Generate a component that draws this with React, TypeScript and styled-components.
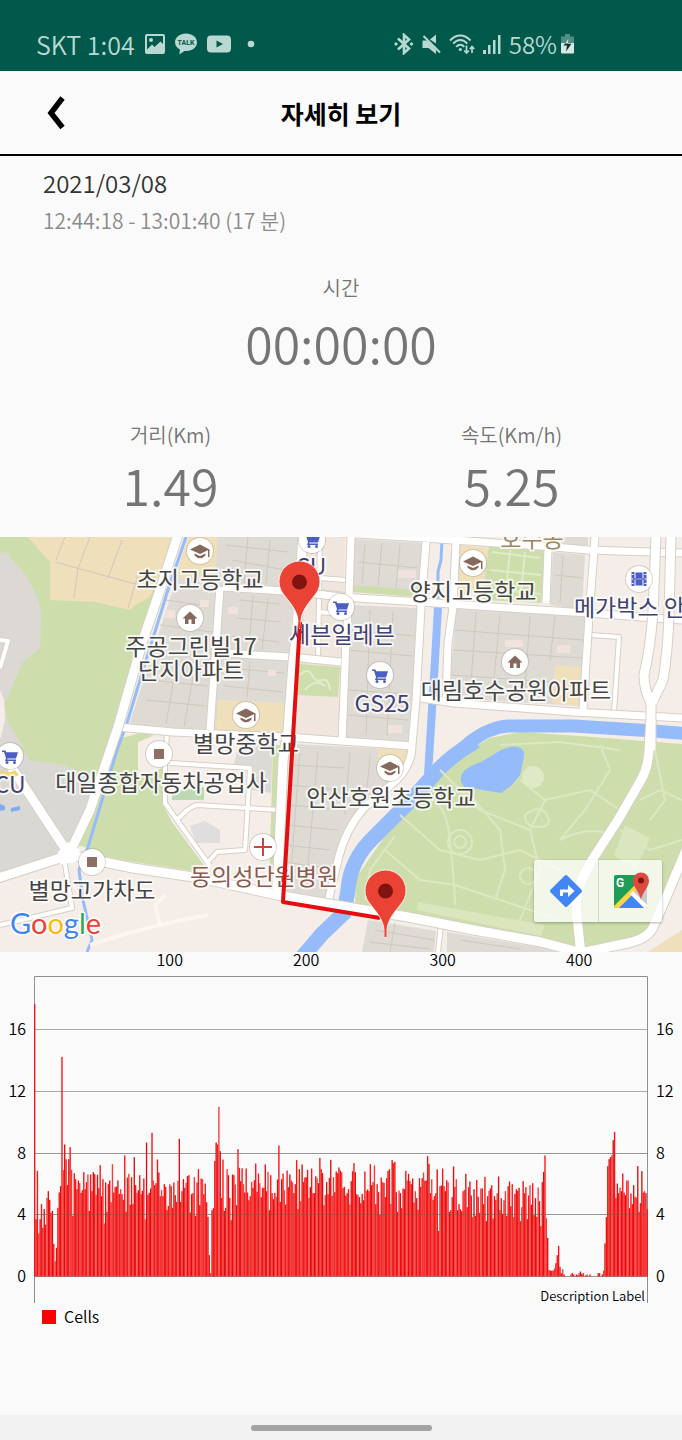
import React from 'react';
import styled, { createGlobalStyle } from 'styled-components';

const fontStack = `'Noto Sans CJK KR', 'Noto Sans', sans-serif`;

const GlobalStyle = createGlobalStyle`
  *, *::before, *::after { box-sizing: border-box; }
  html, body, #root { min-height: 100vh; }
  body { margin: 0; background: #fafafa; font-family: ${fontStack}; }
  #root { display: flex; flex-direction: column; }
  h1, p, dl, dt, dd, figure { margin: 0; font-weight: inherit; }
`;

const Screen = styled.div`
  flex: 1;
  display: flex;
  flex-direction: column;
  width: 100%;
  color: #757575;
  font-weight: 350;
`;

const StatusBar = styled.div`
  display: flex;
  justify-content: space-between;
  height: 71px;
  padding: 17px 108px 0 36px;
  background: #00594b;
  color: #b9d8d2;
  font-size: 24px;
  line-height: 52px;
`;

const StatusGroup = styled.div<{ $gap: number }>`
  display: flex;
  align-items: center;
  gap: ${(p) => p.$gap}px;
  white-space: nowrap;
  svg { display: block; flex: none; }
`;

const Carrier = styled.span`
  font-size: 25px;
`;

const TitleBar = styled.header`
  display: grid;
  grid-template-columns: 112px 1fr 112px;
  align-items: center;
  height: 85px;
  border-bottom: 2px solid #000;
`;

const BackButton = styled.button`
  display: flex;
  align-items: center;
  justify-content: center;
  height: 64px;
  padding: 0;
  border: 0;
  background: none;
  cursor: pointer;
`;

const Title = styled.h1`
  color: #000;
  font-size: 25px;
  font-weight: 700;
  line-height: 36px;
  text-align: center;
`;

const Session = styled.section`
  padding: 9px 43px 0;
`;

const SessionDate = styled.p`
  color: #333;
  font-size: 24px;
  line-height: 36px;
`;

const SessionSpan = styled.p`
  color: #8c8c8c;
  font-size: 21px;
  line-height: 38px;
`;

const Stats = styled.dl`
  display: grid;
  grid-template-columns: 1fr 1fr;
  row-gap: 47px;
  padding: 33px 0 23px;
  text-align: center;
`;

const Stat = styled.div<{ $wide?: boolean }>`
  grid-column: ${(p) => (p.$wide ? '1 / -1' : 'auto')};
  display: flex;
  flex-direction: column;
  gap: ${(p) => (p.$wide ? 8 : 3)}px;
`;

const StatLabel = styled.dt`
  font-size: 20px;
  line-height: 32px;
`;

const StatValue = styled.dd`
  font-size: 50px;
  line-height: 60px;
`;

const MapFrame = styled.section`
  position: relative;
  height: 415px;
  overflow: hidden;
`;

const MapCanvas = styled.svg`
  display: block;
  width: 100%;
  height: 100%;
  font-weight: 400;
`;

const MapActions = styled.div`
  position: absolute;
  right: 20px;
  bottom: 30px;
  display: flex;
  border-radius: 2px;
  background: rgba(255, 255, 255, 0.74);
  box-shadow: 0 1px 3px rgba(0, 0, 0, 0.3);
`;

const MapAction = styled.button`
  display: flex;
  align-items: center;
  justify-content: center;
  width: 64px;
  height: 62px;
  padding: 0;
  border: 0;
  background: none;
  cursor: pointer;
  & + & { border-left: 1px solid rgba(0, 0, 0, 0.12); }
`;

const ChartFrame = styled.figure`
  flex: 1;
`;

const ChartCanvas = styled.svg`
  display: block;
  width: 100%;
  height: auto;
  text { font-family: ${fontStack}; font-size: 16px; fill: #000; }
`;

const NavBar = styled.nav`
  display: flex;
  justify-content: center;
  align-items: center;
  height: 25px;
  background: #f2f2f2;
`;

const HomeHandle = styled.button`
  width: 181px;
  height: 6px;
  padding: 0;
  border: 0;
  border-radius: 3px;
  background: #a3a3a3;
`;

/* ---------- status icons ---------- */

const tint = '#b9d8d2';

const PictureIcon = () => (
  <svg width="20" height="20" viewBox="0 0 20 20">
    <rect x="1" y="1" width="18" height="18" rx="1" fill="none" stroke={tint} strokeWidth="2" />
    <circle cx="6" cy="6" r="2" fill={tint} />
    <path d="M2 15.500 L7 10.500 L9.500 13 L15.500 7.500 L19 11 V18 H2Z" fill={tint} />
  </svg>
);

const TalkIcon = () => (
  <svg width="22" height="22" viewBox="0 0 22 22">
    <path d="M11 0.500C5 .5 0 4.300 0 9.200c0 3.200 2 5.900 5 7.400L4.300 21.500 9.500 17.900c8 .8 12.500-4 12.500-8.700C22 4.300 17 .5 11 .5Z" fill={tint} />
    <text x="11" y="12" textAnchor="middle" fontFamily="Roboto, sans-serif" fontWeight="700" fontSize="7" fill="#00594b">TALK</text>
  </svg>
);

const VideoIcon = () => (
  <svg width="24" height="18" viewBox="0 0 24 18">
    <rect y="0.500" width="24" height="17" rx="4" fill={tint} />
    <path d="M9.500 5.500 16 9 9.500 12.500Z" fill="#00594b" />
  </svg>
);

const DotIcon = () => (
  <svg width="14" height="8" viewBox="0 0 14 8"><circle cx="10" cy="4" r="3.300" fill={tint} /></svg>
);

const BluetoothIcon = () => (
  <svg width="20" height="22" viewBox="0 0 20 22">
    <path d="M4 5.500 L15 15.500 L10 20 V2 L15 6.500 L4 16.500" fill="none" stroke={tint} strokeWidth="2.600" />
    <path d="M0 11 2 9 4 11 2 13ZM15.500 11 17.500 9 19.500 11 17.500 13Z" fill={tint} />
  </svg>
);

const MuteIcon = () => (
  <svg width="19" height="21" viewBox="0 0 19 21">
    <path d="M0.500 6.500 H5 L14 15.500 V20 L6.500 14 H0.500Z M8 5.500 L14 .5 V9.500Z" fill={tint} />
    <path d="M1.500 2 18 18.500" stroke={tint} strokeWidth="2" />
  </svg>
);

const WifiIcon = () => (
  <svg width="26" height="21" viewBox="0 0 26 21" fill="none" stroke={tint} strokeWidth="1.900">
    <path d="M1 6.500 C7 -.2 15.500 -.2 21.500 6.500" />
    <path d="M4.200 9.600 C8.500 4.800 14 4.800 18.300 9.600" />
    <path d="M7.200 12.800 C9.800 10 12.800 10 15.300 12.800" />
    <circle cx="11.300" cy="15.500" r="1.600" fill={tint} stroke="none" />
    <path d="M17.500 11.500V19M15.200 16.500 17.500 19 19.800 16.500M23 19V12.500M20.800 15 23 12.500 25.200 15" strokeWidth="1.700" />
  </svg>
);

const SignalIcon = () => (
  <svg width="18" height="19" viewBox="0 0 18 19">
    <path d="M0 15h3v4H0ZM5 10h2.500v9H5ZM10 5h2.500v14H10ZM15 0h2.500v19H15Z" fill={tint} />
  </svg>
);

const BatteryIcon = () => (
  <svg width="13" height="20" viewBox="0 0 13 20">
    <path d="M4 0h5v2.500h4V9H0V2.500h4Z" fill="#4f8e84" />
    <path d="M0 9h13v9.500q0 1-1 1H1q-1 0-1-1Z" fill="#d5e8e4" />
    <path d="M7.500 4.500 2.500 11.500H6L5 17.500 10.500 9.800H7Z" fill="#12312c" />
    <path d="M7.500 4.500 4 9.500H7.100Z" fill="#d5e8e4" />
  </svg>
);

/* ---------- map ---------- */

type PoiKind = 'school' | 'home' | 'cart' | 'film' | 'square' | 'cross';

const glyphs: Record<PoiKind, React.ReactNode> = {
  school: (
    <g fill="#86685c">
      <path d="M-10-1.500 0-6.500 9.500-1.500 0 3Z" />
      <path d="M-5.500 2.500 0 5 5.500 2.500V4.500Q0 10-5.500 4.500Z" />
      <path d="M8-1.500h1.500V6H8Z" />
    </g>
  ),
  home: <path d="M-7.500 0.500 0-6.500 7.500 0.500H5V6H1.500V1.500H-1.500V6H-5V0.500Z" fill="#86685c" />,
  cart: (
    <g fill="#4c5fc0">
      <path d="M-8-5.500h3.500l.7 1.700H8L6 2.500H-2.500l-.5 1H6V5H-5L-4 2-6-4H-8Z" />
      <circle cx="-3" cy="6.500" r="1.500" /><circle cx="4.500" cy="6.500" r="1.500" />
    </g>
  ),
  film: (
    <g fill="#4c5fc0">
      <path d="M-7.500-7h3v14h-3ZM4.500-7h3v14h-3ZM-3.500-6.500h7v5.500h-7ZM-3.500 1h7v5.500h-7ZM-5-.8h10v1.600H-5Z" />
      <path d="M-7.500-4.500h2m-2 4.500h2m-2 4.500h2M5.500-4.500h2m-2 4.500h2m-2 4.500h2" stroke="#fff" strokeWidth="1.200" />
    </g>
  ),
  square: <rect x="-5" y="-5" width="10" height="10" fill="#8c6e63" />,
  cross: <path d="M-9 0H9M0-9V9" stroke="#c9463f" strokeWidth="2" />,
};

const pois: { kind: PoiKind; x: number; y: number }[] = [
  { kind: 'school', x: 200, y: 551 },
  { kind: 'school', x: 473, y: 563 },
  { kind: 'school', x: 246, y: 715 },
  { kind: 'school', x: 390, y: 768 },
  { kind: 'home', x: 190, y: 618 },
  { kind: 'home', x: 515, y: 662 },
  { kind: 'cart', x: 312, y: 540 },
  { kind: 'cart', x: 341, y: 607 },
  { kind: 'cart', x: 380, y: 675 },
  { kind: 'cart', x: 10, y: 756 },
  { kind: 'film', x: 639, y: 579 },
  { kind: 'square', x: 159, y: 754 },
  { kind: 'square', x: 92, y: 862 },
  { kind: 'cross', x: 263, y: 847 },
];

const dark = '#454545';
const shop = '#3f4272';

const places: { name: string; x: number; y: number; color: string }[] = [
  { name: '초지고등학교', x: 200, y: 588, color: dark },
  { name: '양지고등학교', x: 473, y: 600, color: dark },
  { name: '메가박스 안산', x: 640, y: 616, color: shop },
  { name: '호수동', x: 532, y: 547, color: '#9a8764' },
  { name: 'CU', x: 311, y: 575, color: shop },
  { name: '주공그린빌17', x: 191, y: 655, color: dark },
  { name: '단지아파트', x: 191, y: 679, color: dark },
  { name: '세븐일레븐', x: 342, y: 643, color: shop },
  { name: 'GS25', x: 382, y: 712, color: shop },
  { name: '대림호수공원아파트', x: 516, y: 699, color: dark },
  { name: '별망중학교', x: 246, y: 752, color: dark },
  { name: '대일종합자동차공업사', x: 161, y: 791, color: dark },
  { name: '안산호원초등학교', x: 391, y: 806, color: dark },
  { name: 'CU', x: 10, y: 793, color: shop },
  { name: '동의성단원병원', x: 264, y: 885, color: '#8b5a4e' },
  { name: '별망고가차도', x: 92, y: 899, color: dark },
];

const areas: { fill: string; d: string }[] = [
  // parks and fields on the left
  { fill: '#cddeac', d: 'M0 537H176L118 727 90 848 0 830Z' },
  { fill: '#efdfba', d: 'M28 537H176L150 597 137 604 130 610 95 602 50 600V562Z' },
  { fill: '#dcd9d5', d: 'M0 552 7 553 27 577 37 597 41 613 40 648 22 663 5 703 7 720 23 747 0 750Z' },
  { fill: '#f5ede7', d: 'M0 690 4 700 5 720 0 740Z' },
  { fill: '#dad8d5', d: 'M0 745 20 747 30 760 63 765 98 778 70 852 0 875Z' },
  { fill: '#cddeac', d: 'M118 738 155 735 138 742V778L162 768 163 805 172 822 206 868 205 873 95 856 88 848Z' },
  // housing blocks
  { fill: '#dedbd5', d: 'M190 537H298L283 735 128 728Z' },
  { fill: '#efdfba', d: 'M188 537H218L215 578 175 578Z' },
  { fill: '#efdfba', d: 'M218 700 286 703 284 732 216 730Z' },
  { fill: '#f0e6dd', d: 'M304 537H345L341 740 290 736Z' },
  { fill: '#cddeac', d: 'M299 664 340 667 338 697 297 695Z' },
  { fill: '#dedbd5', d: 'M355 539 423 543 420 597 352 592Z' },
  { fill: '#cddeac', d: 'M355 585 415 590 420 584V597L352 592Z' },
  { fill: '#dedbd5', d: 'M350 605 417 608 411 742 343 737Z' },
  { fill: '#dedbd5', d: 'M456 607 586 617 580 706 449 698Z' },
  { fill: '#efdfba', d: 'M555 665 581 667 578 706 552 703Z' },
  { fill: '#efdfba', d: 'M460 545 491 548 487 585 458 600Z' },
  { fill: '#cddeac', d: 'M489 546 545 549 541 603 482 600Z' },
  { fill: '#dedbd5', d: 'M553 552 585 555 582 610 550 605Z' },
  { fill: '#dedbd5', d: 'M545 537H588V546L545 543Z' },
  { fill: '#dedbd5', d: 'M292 744 410 750 406 765 345 835 325 898 281 890Z' },
  { fill: '#efdfba', d: 'M378 745 409 748 408 765 392 775 378 770Z' },
  { fill: '#dcdad7', d: 'M240 740 273 742 271 793 252 790 250 768 234 764Z' },
  { fill: '#cddeac', d: 'M273 745H281L274 892H269Z' },
  { fill: '#bcd9b4', d: 'M172 792 204 787V800H172Z' },
  { fill: '#cddeac', d: 'M122 738 140 733H155L138 742V775L112 780Z' },
  { fill: '#e0dddf', d: 'M190 826 205 821 220 830V843H196Z' },
  { fill: '#dedbd5', d: 'M368 920 436 931 434 952H362Z' },
  { fill: '#dedbd5', d: 'M447 932 565 952H447Z' },
  { fill: '#efdfba', d: 'M682 930V952H648Z' },
  // lake park
  { fill: '#cddeac', d: 'M448 762 490 738 520 732 580 736 682 744V853L668 893 650 930 628 941 585 948 480 930 355 905 356 878 385 836 420 800Z' },
];

const rivers: { width: number; d: string }[] = [
  { width: 3, d: 'M186 537 167 593 140 680 127 723 117 750 88 847 79 870 83 900 92 940 87 952' },
  { width: 3, d: 'M442 540 441 560 438 572V607' },
  { width: 8, d: 'M438 607 435 660 432 710 428 775' },
  { width: 13, d: 'M690 734 654 731 574 726 508 726Q490 727 470 742L438 770' },
  { width: 15, d: 'M476 741Q452 755 438 770L414 797 374 837Q350 860 348 890L344 913 322 934 298 962' },
];

const lanes: string[] = [
  'M170 763 250 768 245 850 217 852 208 862',
  'M177 820Q190 806 197 805L280 810',
  'M167 733 165 767V803L177 820 210 866',
  'M591 635 619 637 614 712',
  'M320 537 318 660M318 612 345 614M320 578 345 580M318 592 345 595',
  'M64 858 72 908 0 925',
  'M0 640 8 641 0 668',
  'M345 575 350 575',
  'M441 925 438 952',
];

const streets: string[] = [
  'M223 587 300 592 341 597 421 602 508 608 588 613 682 620',
  'M220 587 210 730',
  'M215 652 253 655 290 657 341 662',
  'M118 727 173 732 287 737 341 741 413 746',
  'M351 537 349 597 346 640 342 741',
  'M426 542 421 607 418 663 416 700 412 745Q412 768 391 785L364 808Q345 830 338 860L328 902',
  'M456 542 453 607 448 643 446 700',
  'M421 698 454 703 574 712 682 718',
  'M341 533 424 538 554 547 588 550 682 553',
  'M548 550 546 603',
  'M595 537 589 617 583 710',
];

const avenues: string[] = [
  'M178 535 160 590 143 640 118 727 90 810 70 852',
  'M10 765 66 850',
  'M-5 879 60 858Q68 854 80 857L133 868 200 878 277 895 341 906 408 917 474 930 541 942 590 955',
  'M303 535 297 630 293 663 288 730 283 760 277 895',
  'M656 535 653 613Q650 650 644 675 644 690 651 703L651 750',
  'M671 535 669 613Q668 650 663 680L652 703',
  'M651 720 649 750Q648 768 641 780L618 820 594 857Q576 885 576 907L581 955',
  'M585 952 628 943Q650 938 654 925L668 893 686 850',
];

const blockLines =
  'M226 545 288 552M232 560 285 570M248 537 244 583M270 540 266 584M240 600 280 604M236 618 281 622M229 636 279 642M253 596 249 648M268 598 262 650M165 600 210 606M160 625 212 632M150 680 208 686M146 700 206 706M175 672 166 724M193 676 184 727M228 668 284 673M224 686 283 692M250 662 247 698M365 545 362 583M382 543 378 586M400 545 396 588M358 562 418 568M370 610 366 735M393 612 387 736M350 630 414 636M348 650 412 656M347 690 410 694M346 715 408 720M476 612 470 698M500 614 492 700M530 616 524 702M555 616 550 660M455 630 583 640M453 650 582 658M452 675 550 682M563 556 560 603M555 575 583 578M300 750 290 886M318 752 306 888M292 765 345 768M290 785 340 790M288 805 345 810M286 825 338 830M285 845 330 850M284 862 326 868M350 752 345 815M370 755 366 800M375 930 434 940M370 942 430 949M395 923 390 952M460 940 520 949M55 562 150 588M65 537 56 560M90 537 78 568M122 540 108 578M78 568 74 598M138 575 128 608';

const parkLines =
  'M400 815 440 850 480 860 520 850 560 870M415 800Q445 790 450 840T455 905M470 795 500 830 505 870 495 900M520 780 545 800 590 790 620 810M545 800 530 830 540 870 520 920M385 850 420 880 455 885 500 900 560 920M440 770 480 810 530 830M600 745 610 770 585 810 560 840M640 800 660 790 682 800M620 830 650 850 682 840M500 745 560 742 620 750M395 836 370 870 365 900M560 840Q590 825 610 835M655 750 665 800 650 820M448 842a12 12 0 1 0 24 0a12 12 0 1 0-24 0M454 842a6 6 0 1 0 12 0a6 6 0 1 0-12 0M520 876a8 8 0 1 0 16 0a8 8 0 1 0-16 0M525 815q15-12 22 0t-10 12q-12 0-12-12';

const Pin = ({ x, y }: { x: number; y: number }) => (
  <g transform={`translate(${x} ${y})`}>
    <path d="M0 47C-1.500 28-8 23-14.500 14A20.500 20.500 0 1 1 14.500 14C8 23 1.500 28 0 47Z" fill="#ea4335" stroke="#fff" strokeOpacity=".8" strokeWidth="1" />
    <path d="M0 25V46" stroke="#ea4335" strokeWidth="2" />
    <circle r="7.500" fill="#811411" />
  </g>
);

const Roads = ({ paths, width }: { paths: string[]; width: number }) => (
  <g fill="none" strokeLinejoin="round">
    {paths.map((d) => <path key={d} d={d} stroke="#d8cfc5" strokeWidth={width + 2} />)}
    {paths.map((d) => <path key={d + 'f'} d={d} stroke="#fff" strokeWidth={width} />)}
  </g>
);

const RouteMap = () => (
  <MapCanvas viewBox="0 537 682 415" preserveAspectRatio="xMidYMid slice" role="img" aria-label="이동 경로 지도">
    <rect x="-400" y="537" width="1500" height="415" fill="#f5ede7" />
    {areas.map((a) => <path key={a.d} d={a.d} fill={a.fill} />)}
    <path d={blockLines} stroke="#cfc8bc" strokeWidth="1" fill="none" />
    <path d="M165 610h10v8h-10ZM200 600h9v7h-9ZM268 670h8v6h-8ZM398 570h18v8h-18ZM388 725h14v8h-14ZM557 645h13v8h-13ZM505 640h18v7h-18ZM228 607h10v7h-10Z" fill="#f2e2dc" />
    <path d="M300 675q8-8 12 0t10 5 8 10M305 690q10-12 20-4" stroke="#e2ecca" strokeWidth="2" fill="none" />
    <path d="M492 552 540 558M490 570 541 575M500 590 540 594M510 550 505 600M525 552 520 600" stroke="#e0ebc9" strokeWidth="2" />
    <g fill="none" stroke="#95bbfb">
      {rivers.map((r) => <path key={r.d} d={r.d} strokeWidth={r.width} />)}
    </g>
    <path d="M463 772Q470 765 481 762L501 750Q512 745 518 747 525 749 524 756 522 766 520 775L511 786 501 793 464 787Q458 781 463 772Z" fill="#95bbfb" />
    <path d="M0 804l5 2v4l-5 1ZM11 808l9-2v4l-9 2Z" fill="#7fabf0" />
    <path d={parkLines} stroke="#dce8c2" strokeWidth="2" fill="none" />
    <circle cx="533" cy="777" r="11" fill="#dfe9c6" />
    <path d="M625 825 650 838 636 870 614 855ZM418 902 545 925 541 936 417 910Z" fill="#dae6be" />
    <path d="M90 945Q150 925 208 915M160 925 155 905 165 895" stroke="#fbf6f0" strokeWidth="4" fill="none" />
    <Roads paths={lanes} width={4} />
    <Roads paths={streets} width={7} />
    <Roads paths={avenues} width={9} />
    <path d="M1 770q7 5 14 0l4 5q-8 5-18 0Z" fill="#f6d36b" />
    <path d="M58 852 68 842 80 850 76 862 60 864Z" fill="#fff" />

    {pois.map((p) => (
      <g key={`${p.x}-${p.y}`} transform={`translate(${p.x} ${p.y})`}>
        <circle r="14" fill="#8a8378" opacity=".3" />
        <circle r="13" fill="#fff" />
        {glyphs[p.kind]}
      </g>
    ))}
    <g fontFamily={fontStack} fontSize="23" textAnchor="middle" stroke="#fff" strokeOpacity=".75" strokeWidth="4" strokeLinejoin="round" paintOrder="stroke">
      {places.map((p) => <text key={`${p.name}${p.x}`} x={p.x} y={p.y} fill={p.color}>{p.name}</text>)}
    </g>

    <path d="M300 622 283 902 380 918" fill="none" stroke="#e40d0f" strokeWidth="4" strokeLinejoin="round" />
    <Pin x={299.500} y={582} />
    <Pin x={385.500} y={891} />

    <text x="10" y="934" fontFamily="Lato, sans-serif" fontWeight="400" fontSize="29" stroke="#fff" strokeWidth="3" strokeLinejoin="round" paintOrder="stroke">
      <tspan fill="#4285f4">G</tspan><tspan fill="#ea4335">o</tspan><tspan fill="#fbbc05">o</tspan><tspan fill="#4285f4">g</tspan><tspan fill="#34a853">l</tspan><tspan fill="#ea4335">e</tspan>
    </text>
    <text x="10" y="934" fontFamily="Lato, sans-serif" fontWeight="400" fontSize="29" strokeWidth="1" aria-hidden="true" />
  </MapCanvas>
);

const DirectionsIcon = () => (
  <svg width="34" height="34" viewBox="0 0 34 34">
    <path d="M15.800 1.500q1.200-1 2.400 0L32.500 15.800q1 1.200 0 2.400L18.200 32.500q-1.200 1-2.400 0L1.500 18.200q-1-1.200 0-2.400Z" fill="#4285f4" />
    <path d="M11 22V15.500H19V11L25.500 17 19 23V18.500H14V22Z" fill="#fff" />
  </svg>
);

const MapsAppIcon = () => (
  <svg width="38" height="38" viewBox="0 0 38 38">
    <clipPath id="tile"><rect x="2" y="3" width="33" height="33" rx="2" /></clipPath>
    <g clipPath="url(#tile)">
      <rect x="2" y="3" width="33" height="33" fill="#1e9d58" />
      <path d="M24 14 36 5V37L20 20Z" fill="#c9cacb" />
      <path d="M3 37 19 21 35 37Z" fill="#4285f4" />
      <path d="M2 34 23 13 26 17 5 38H2Z" fill="#fbd643" />
      <path d="M18 22 21 19 37 35 34 38Z" fill="#fff" />
    </g>
    <text x="4" y="15" fontFamily="Roboto, sans-serif" fontSize="12" fontWeight="700" fill="#fff">G</text>
    <path d="M29 28C28 20 21 16 21 8.500A8 8 0 0 1 37 8.500C37 16 30 20 29 28Z" fill="#dd4b3e" />
    <circle cx="29" cy="8.500" r="3" fill="#811411" />
  </svg>
);

/* ---------- chart ---------- */

// Raw speed samples of the walk: 994 means standing still, 46.3 steps are 1 km/h.
const samples = [
  177, 822, 677, 865, 822, 777, 848, 792, 838, 758, 738, 764, 803, 797, 896, 948, 908, 788, 742, 723, 335, 675, 598, 642, 719,
  642, 606, 674, 812, 684, 702, 732, 706, 714, 743, 735, 681, 732, 711, 688, 797, 688, 738, 681, 687, 749, 689, 729, 660, 753,
  702, 835, 712, 800, 717, 706, 771, 657, 742, 726, 724, 706, 746, 732, 747, 764, 631, 800, 697, 686, 779, 696, 777, 636, 720,
  743, 735, 690, 747, 737, 700, 822, 592, 749, 743, 730, 563, 706, 720, 714, 643, 682, 753, 735, 753, 717, 725, 794, 782, 717,
  723, 788, 712, 750, 770, 707, 581, 770, 738, 702, 728, 713, 693, 690, 802, 747, 744, 696, 812, 712, 672, 780, 700, 702, 747,
  715, 771, 815, 930, 984, 795, 789, 647, 592, 598, 485, 618, 758, 643, 797, 788, 672, 690, 758, 825, 688, 690, 718, 780, 612,
  668, 708, 669, 717, 742, 670, 742, 765, 753, 710, 728, 705, 655, 740, 685, 714, 756, 728, 728, 658, 738, 680, 795, 690, 744,
  762, 743, 755, 703, 601, 770, 702, 685, 735, 778, 676, 726, 688, 706, 711, 744, 717, 645, 792, 672, 768, 658, 711, 697, 696,
  674, 758, 726, 670, 744, 744, 693, 699, 714, 638, 672, 684, 780, 750, 711, 747, 698, 644, 752, 696, 741, 679, 684, 667, 676,
  681, 729, 725, 751, 744, 732, 778, 708, 678, 654, 681, 747, 750, 756, 774, 746, 765, 679, 738, 733, 738, 657, 720, 711, 661,
  777, 717, 741, 809, 697, 711, 713, 756, 699, 677, 672, 776, 645, 654, 650, 741, 800, 736, 744, 789, 730, 732, 677, 706, 686,
  708, 717, 700, 772, 738, 759, 794, 699, 725, 699, 682, 707, 706, 633, 656, 744, 702, 764, 753, 744, 673, 857, 723, 721, 670,
  723, 738, 705, 711, 800, 795, 756, 664, 725, 702, 795, 777, 792, 798, 738, 734, 686, 786, 726, 709, 751, 816, 732, 812, 704,
  755, 803, 730, 730, 777, 695, 828, 753, 737, 730, 720, 820, 753, 764, 744, 694, 795, 759, 806, 765, 738, 812, 723, 709, 783,
  717, 816, 746, 732, 737, 728, 828, 786, 708, 744, 726, 822, 751, 720, 778, 714, 810, 759, 815, 727, 768, 843, 711, 680, 631,
  819, 878, 975, 976, 977, 976, 970, 954, 930, 902, 965, 984, 972, 988, 994, 994, 994, 994, 988, 984, 988, 994, 988, 990, 984,
  979, 986, 984, 994, 990, 988, 994, 988, 994, 994, 994, 994, 994, 984, 984, 994, 988, 976, 895, 816, 663, 642, 636, 631, 585,
  560, 758, 715, 744, 727, 738, 685, 742, 750, 706, 706, 789, 745, 777, 720, 755, 757, 663, 800, 774, 678, 742, 738, 744, 792,
];

const barShades = ['#ff1212', '#d81212', '#ff1212', '#f83c3c', '#d81212', '#ff1212'];
const plot = { left: 34, right: 648, top: 25, base: 324.500, foot: 351 };
const barWidth = (plot.right - plot.left) / samples.length;

const gridLines = [
  { value: 16, y: 77 },
  { value: 12, y: 139 },
  { value: 8, y: 201 },
  { value: 4, y: 262 },
  { value: 0, y: 324 },
];

const ticks = [100, 200, 300, 400];

const SpeedChart = () => (
  <ChartCanvas viewBox="0 0 682 383" role="img" aria-label="속도 그래프">
    {gridLines.map((g) => (
      <path key={g.value} d={`M${plot.left} ${g.y + 0.5}H${plot.right}`} stroke="#a9a9a9" strokeWidth="1" />
    ))}
    <path d={`M34.500 ${plot.foot}V24.500H647.500V${plot.foot}`} fill="none" stroke="#8f8f8f" strokeWidth="1" />
    {samples.map((s, i) => (
      <rect
        key={i}
        x={plot.left + i * barWidth}
        y={plot.base - (994 - s) / 3}
        width={barWidth}
        height={(994 - s) / 3}
        fill={barShades[i % barShades.length]}
      />
    ))}
    {gridLines.slice(2).map((g) => (
      <path key={g.value} d={`M${plot.left} ${g.y + 0.5}H${plot.right}`} stroke="#707070" strokeOpacity=".3" strokeWidth="1" />
    ))}
    {ticks.map((t) => (
      <text key={t} x={plot.left + (t - 0.5) * barWidth} y="14" textAnchor="middle">{t}</text>
    ))}
    {gridLines.map((g) => (
      <React.Fragment key={g.value}>
        <text x="26" y={g.y + 6} textAnchor="end">{g.value}</text>
        <text x="656" y={g.y + 6}>{g.value}</text>
      </React.Fragment>
    ))}
    <text x="645" y="349" textAnchor="end" style={{ fontSize: 13 }}>Description Label</text>
    <rect x="42" y="358" width="14" height="14" fill="#f00" />
    <text x="64" y="371">Cells</text>
  </ChartCanvas>
);

export default function App() {
  return (
    <>
      <GlobalStyle />
      <Screen>
        <StatusBar>
          <StatusGroup $gap={10}>
            <Carrier>SKT 1:04</Carrier>
            <PictureIcon />
            <TalkIcon />
            <VideoIcon />
            <DotIcon />
          </StatusGroup>
          <StatusGroup $gap={8}>
            <BluetoothIcon />
            <MuteIcon />
            <WifiIcon />
            <SignalIcon />
            <StatusGroup $gap={4}>
              <span>58%</span>
              <BatteryIcon />
            </StatusGroup>
          </StatusGroup>
        </StatusBar>

        <TitleBar>
          <BackButton aria-label="뒤로">
            <svg width="18" height="34" viewBox="0 0 18 34">
              <path d="M15.500 2 4 17 15.500 31.500" fill="none" stroke="#000" strokeWidth="5.500" />
            </svg>
          </BackButton>
          <Title>자세히 보기</Title>
        </TitleBar>

        <Session>
          <SessionDate>2021/03/08</SessionDate>
          <SessionSpan>12:44:18 - 13:01:40 (17 분)</SessionSpan>
        </Session>

        <Stats>
          <Stat $wide>
            <StatLabel>시간</StatLabel>
            <StatValue>00:00:00</StatValue>
          </Stat>
          <Stat>
            <StatLabel>거리(Km)</StatLabel>
            <StatValue>1.49</StatValue>
          </Stat>
          <Stat>
            <StatLabel>속도(Km/h)</StatLabel>
            <StatValue>5.25</StatValue>
          </Stat>
        </Stats>

        <MapFrame>
          <RouteMap />
          <MapActions>
            <MapAction aria-label="길찾기"><DirectionsIcon /></MapAction>
            <MapAction aria-label="지도 앱에서 열기"><MapsAppIcon /></MapAction>
          </MapActions>
        </MapFrame>

        <ChartFrame>
          <SpeedChart />
        </ChartFrame>

        <NavBar>
          <HomeHandle aria-label="홈" />
        </NavBar>
      </Screen>
    </>
  );
}
